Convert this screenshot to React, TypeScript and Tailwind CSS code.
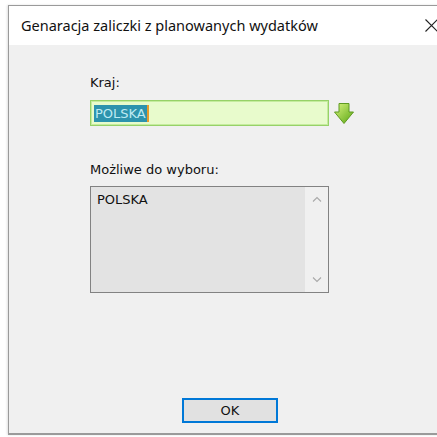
import React from 'react'

const uiFont = { fontFamily: '"DejaVu Sans", Verdana, sans-serif' }

function DownArrowIcon() {
  return (
    <svg width="20" height="21" viewBox="0 0 20 21">
      <defs>
        <linearGradient id="arrowFill" x1="0" y1="0" x2="1" y2="1">
          <stop offset="0" stopColor="#d9f47e" />
          <stop offset="1" stopColor="#58a512" />
        </linearGradient>
      </defs>
      <path
        d="M5 0.5h10v8.5h4.5L10 20.5 0.5 9H5z"
        fill="url(#arrowFill)"
        stroke="#5f9a22"
        strokeWidth="1"
        strokeLinejoin="round"
      />
    </svg>
  )
}

function Chevron({ up }: { up?: boolean }) {
  return (
    <svg width="10" height="6" viewBox="0 0 10 6">
      <path
        d={up ? 'M1 5.5 5 1.5 9 5.5' : 'M1 0.5 5 4.5 9 0.5'}
        fill="none"
        stroke="#a9a9a9"
        strokeWidth="1.1"
      />
    </svg>
  )
}

export default function App() {
  return (
    <div className="w-[437px] h-[437px] bg-white pl-[8px] pt-[5px] pb-[2px] overflow-hidden">
      <div className="w-[440px] h-full flex flex-col border-l border-t border-b-2 border-[#9a9a9a] shadow-[-1px_0_2px_rgba(0,0,0,0.12)]">
        {/* title bar */}
        <div className="h-[39px] shrink-0 bg-white flex items-center pl-[12px] pr-[10px]">
          <span
            className="text-[14.5px] text-[#111] flex-1"
            style={{ fontFamily: '"Noto Sans", "Open Sans", sans-serif' }}
          >
            Genaracja zaliczki z planowanych wydatków
          </span>
          <svg width="13" height="13" viewBox="0 0 13 13">
            <path d="M0.5 0.5 12.5 12.5M12.5 0.5 0.5 12.5" stroke="#222" strokeWidth="1.1" />
          </svg>
        </div>

        {/* dialog body */}
        <div className="flex-1 bg-[#f0f0f0] flex flex-col pl-[81px]" style={uiFont}>
          <div className="text-[13px] text-[#111] mt-[30px] leading-[16px]">Kraj:</div>
          <div className="flex items-center gap-[5px] mt-[9px]">
            <div className="w-[239px] h-[26px] bg-[#e8fbcc] border border-[#97d168] shadow-[inset_0_0_0_1px_#c5ec9e] flex items-center pl-[3px]">
              <span className="bg-[#2d93ad] text-[#bfeaf2] text-[13px] leading-[17px] px-px border-r-2 border-[#e89a2c]">
                POLSKA
              </span>
            </div>
            <DownArrowIcon />
          </div>

          <div className="text-[13px] text-[#111] mt-[36px] leading-[16px]">Możliwe do wyboru:</div>
          <div className="w-[239px] h-[107px] mt-[8px] border border-[#828282] flex">
            <div className="flex-1 bg-[#e3e3e3] pl-[6px] pt-[5px] text-[13px] leading-[16px] text-[#111]">
              POLSKA
            </div>
            <div className="w-[23px] bg-[#f0f0f0] flex flex-col items-center justify-between py-[9px]">
              <Chevron up />
              <Chevron />
            </div>
          </div>

          <div className="flex-1" />
          <div className="pl-[92px] pb-[10px]">
            <button className="w-[96px] h-[25px] bg-[#e1e1e1] border-2 border-[#0078d7] text-[13px] text-[#111] leading-none">
              OK
            </button>
          </div>
        </div>
      </div>
    </div>
  )
}
